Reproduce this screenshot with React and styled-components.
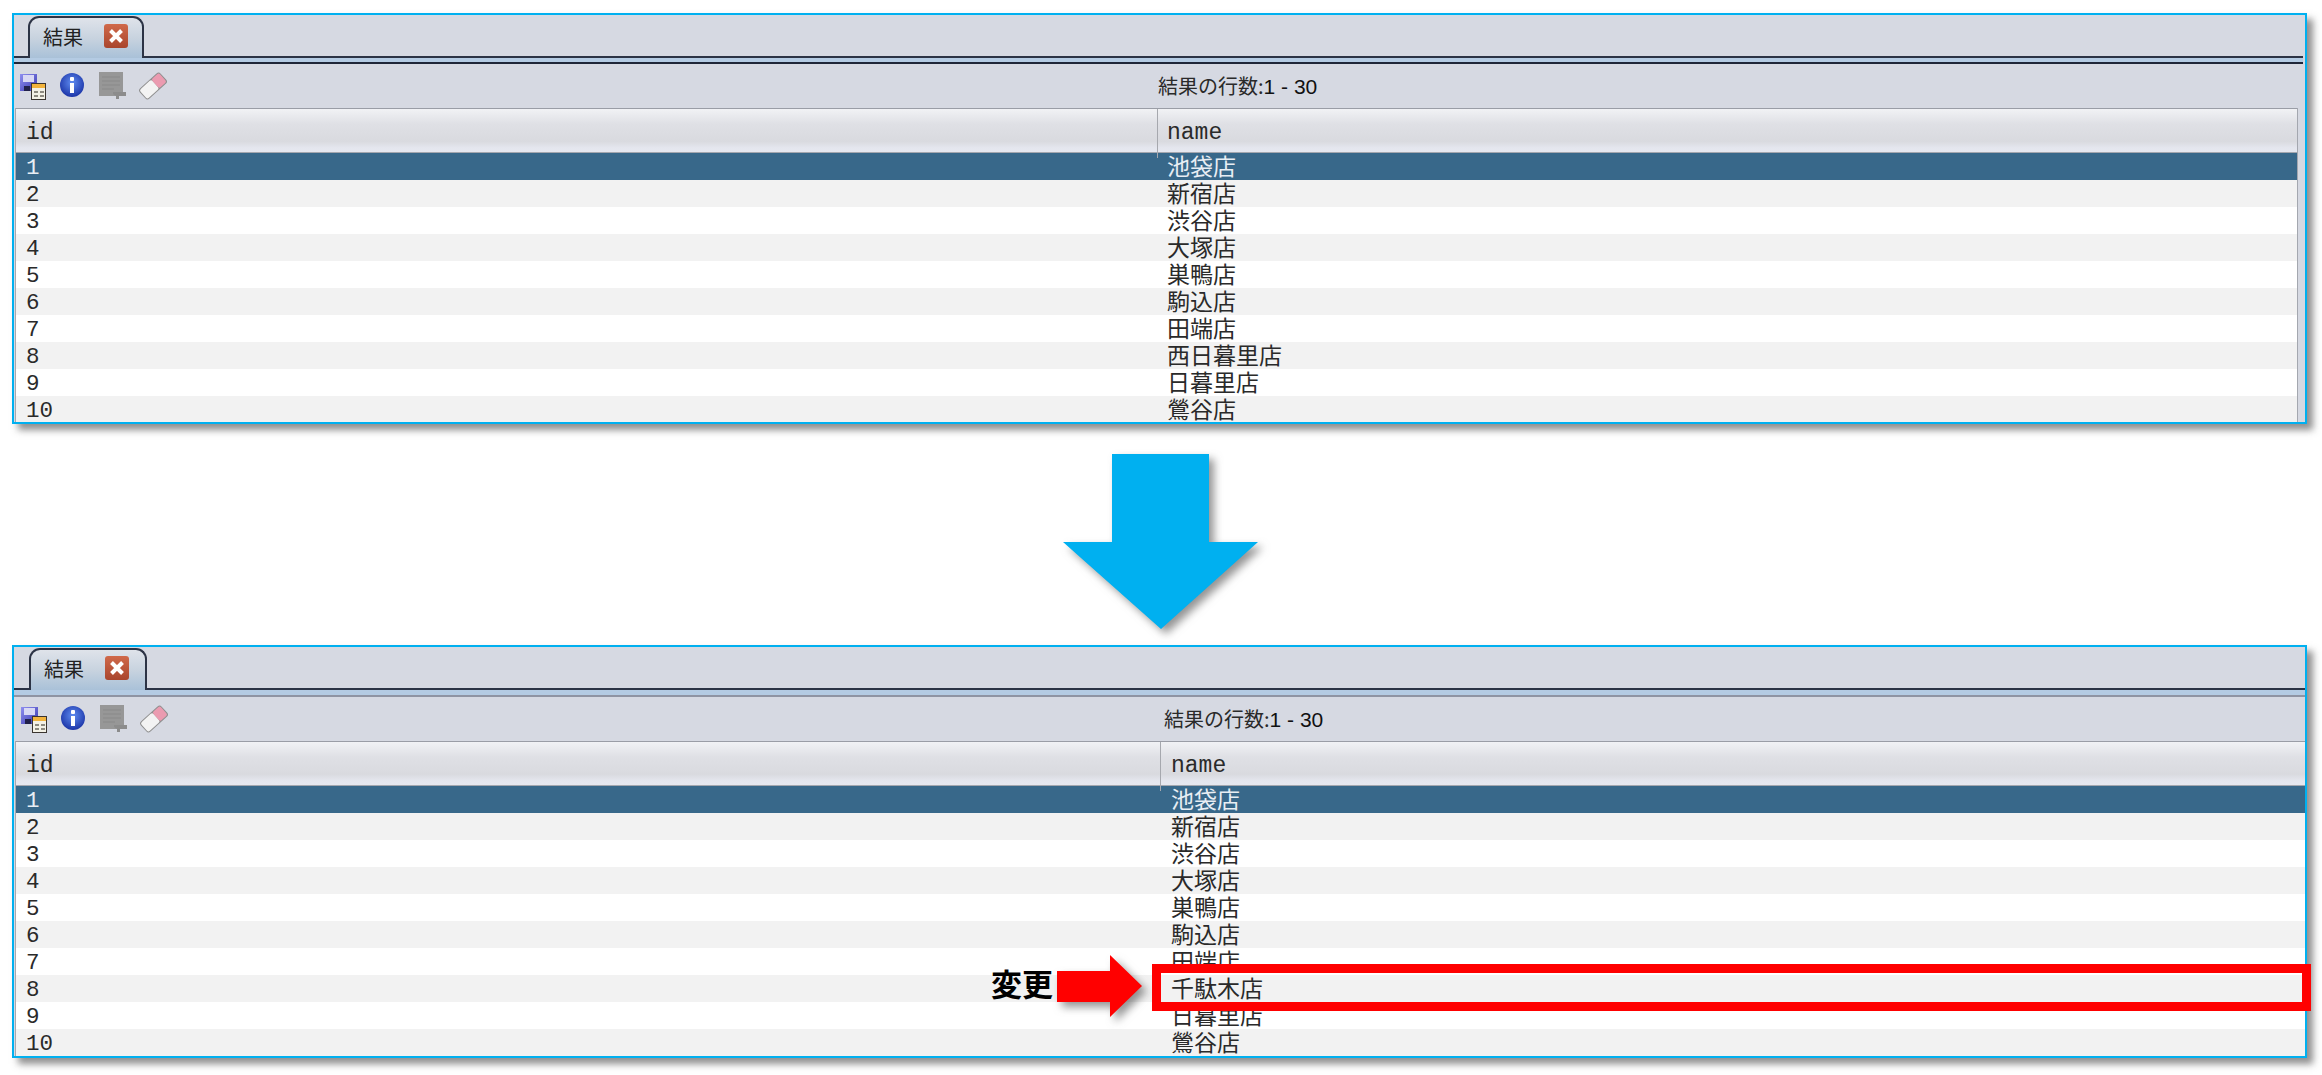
import React from "react";
import styled, { createGlobalStyle } from "styled-components";

const GlobalStyle = createGlobalStyle`
  html, body {
    margin: 0;
    padding: 0;
    background: #fff;
    overflow: hidden;
  }
`;

const CJK = `"Noto Sans CJK JP", "Liberation Sans", sans-serif`;
const MONO = `"Liberation Mono", "Noto Sans CJK JP", monospace`;

const Page = styled.div`
  position: relative;
  width: 2322px;
  height: 1075px;
  box-sizing: border-box;
  padding: 13px 15px 0 12px;
`;

const Panel = styled.section`
  box-sizing: border-box;
  height: ${(p) => (p.$lower ? "413px" : "411px")};
  border: 2px solid #00b0f0;
  background: #d6d9e2;
  box-shadow: 6px 6px 7px rgba(70, 70, 70, 0.6);
  overflow: hidden;
`;

const TabBar = styled.div`
  height: 43px;
  box-sizing: border-box;
  padding-left: ${(p) => (p.$lower ? "15px" : "14px")};
  border-bottom: 2px solid #2c3345;
  display: flex;
  align-items: flex-end;
  margin-right: ${(p) => (p.$lower ? "0" : "2px")};
`;

const Tab = styled.div`
  box-sizing: border-box;
  width: ${(p) => (p.$lower ? "118px" : "116px")};
  height: 42px;
  margin-bottom: -2px;
  padding: 0 0 4px 13px;
  display: flex;
  align-items: center;
  gap: 21px;
  border: 2px solid #2c3345;
  border-bottom: none;
  border-radius: 11px 11px 0 0;
  background: linear-gradient(#dfe3ea, #c8d3df 50%, #a9c1d8);
  font: 20px ${CJK};
  color: #222;
`;

const CloseBox = styled.span`
  width: 24px;
  height: 24px;
  flex: none;
  border-radius: 3px;
  background: linear-gradient(#d0694a, #a9452d);
  display: flex;
  align-items: center;
  justify-content: center;
`;

const TabStrip = styled.div`
  height: ${(p) => (p.$lower ? "5px" : "4px")};
  background: #b4cbe3;
  margin-right: ${(p) => (p.$lower ? "0" : "2px")};
  border-bottom: ${(p) => (p.$lower ? "2px solid #8f94a3" : "2px solid #1f2638")};
`;

const Toolbar = styled.div`
  height: 44px;
  display: grid;
  grid-template-columns: ${(p) => (p.$lower ? "1150px" : "1144px")} 1fr;
  align-items: center;
`;

const IconRow = styled.div`
  display: flex;
  gap: 12px;
  padding-left: ${(p) => (p.$lower ? "6px" : "5px")};
`;

const Count = styled.div`
  font: 20px ${CJK};
  color: #2a2a2a;
  line-height: 44px;

  b {
    font: 21px "Liberation Sans", sans-serif;
    color: #111;
  }
`;

const Table = styled.div`
  margin-left: 1px;
  margin-right: ${(p) => (p.$lower ? "0" : "7px")};
  border-left: 1px solid #a4a7af;
  border-right: ${(p) => (p.$lower ? "none" : "1px solid #a4a7af")};
`;

const HeaderRow = styled.div`
  display: grid;
  grid-template-columns: ${(p) => (p.$lower ? "1145px" : "1142px")} 1fr;
  box-sizing: border-box;
  height: 45px;
  border-top: 1px solid #9a9da6;
  border-bottom: 1px solid #a4a7af;
  background: linear-gradient(#f1f2f5, #dfe0e5 35%, #d9dadf 75%, #e4e6ee 90%, #e6e8f0);
`;

const HeaderCell = styled.div`
  font: 23px/49px ${MONO};
  color: #2a2a2a;
  padding-left: ${(p) => (p.$name ? (p.$lower ? "10px" : "9px") : "10px")};
  border-right: ${(p) => (p.$name ? "none" : "1px solid #a6a8ae")};
`;

const Row = styled.div`
  display: grid;
  grid-template-columns: ${(p) => (p.$lower ? "1145px" : "1142px")} 1fr;
  height: 27px;
  background: ${(p) =>
    p.$selected ? "#38688a" : p.$stripe ? "#f2f2f2" : "#fff"};
  color: ${(p) => (p.$selected ? "#e8eef4" : "#2a2a2a")};
`;

const IdCell = styled.div`
  font: 22.5px/31px ${MONO};
  padding-left: 10px;
`;

const NameCell = styled.div`
  font: 23px/25px ${CJK};
  padding-left: ${(p) => (p.$lower ? "10px" : "9px")};
  white-space: nowrap;
`;

const Divider = styled.div`
  height: 221px;
  display: flex;
  justify-content: center;
  padding-top: 30px;
  box-sizing: border-box;
  padding-left: 1px;
`;

const ChangeBox = styled.div`
  position: absolute;
  left: 1152px;
  top: 964px;
  width: 1159px;
  height: 47px;
  box-sizing: border-box;
  border: 9px solid #f00;
`;

const ChangeLabel = styled.div`
  position: absolute;
  left: 991px;
  top: 961px;
  font: 700 31px/44px ${CJK};
  color: #000;
`;

const ChangeArrow = styled.svg`
  position: absolute;
  left: 1057px;
  top: 955px;
  overflow: visible;
  filter: drop-shadow(5px 5px 4px rgba(60, 60, 60, 0.55));
`;

const DownArrow = styled.svg`
  overflow: visible;
  filter: drop-shadow(5px 5px 4px rgba(60, 60, 60, 0.55));
`;

function SaveIcon() {
  return (
    <svg width="28" height="28" viewBox="0 0 28 28">
      <defs>
        <linearGradient id="floppy" x1="0" y1="0" x2="1" y2="1">
          <stop offset="0" stopColor="#8f8ff0" />
          <stop offset="1" stopColor="#3a3ab0" />
        </linearGradient>
      </defs>
      <rect x="1" y="2" width="17" height="17" fill="url(#floppy)" />
      <rect x="4" y="3" width="11" height="7" fill="#d8d8f4" />
      <rect x="5" y="14" width="6" height="5" fill="#20204a" />
      <rect x="12" y="11" width="15" height="17" fill="#3b3530" />
      <rect x="13" y="12" width="13" height="15" fill="#f3f1e6" />
      <rect x="13" y="12" width="13" height="4" fill="#f2b33c" />
      <path d="M15 19h4v2h-4zM21 19h4v2h-4zM15 23h4v2h-4zM21 23h4v2h-4z" fill="#8d8a80" />
    </svg>
  );
}

function InfoIcon() {
  return (
    <svg width="28" height="28" viewBox="0 0 28 28">
      <defs>
        <radialGradient id="infoBall" cx="0.5" cy="0.4" r="0.6">
          <stop offset="0" stopColor="#5f8cf0" />
          <stop offset="1" stopColor="#1c35a8" />
        </radialGradient>
      </defs>
      <circle cx="13" cy="13" r="12" fill="url(#infoBall)" />
      <rect x="11" y="5" width="4" height="4" rx="1" fill="#fff" />
      <rect x="11" y="11" width="4" height="10" fill="#fff" />
    </svg>
  );
}

function ReloadIcon() {
  return (
    <svg width="28" height="28" viewBox="0 0 28 28">
      <rect x="0" y="0" width="24" height="24" fill="#979797" />
      <path d="M3 5h18M3 9h18M3 13h18M3 17h12" stroke="#8f8f8f" strokeWidth="1.5" />
      <path d="M14 20h13v4H20v3h-3v-3l-3-2z" fill="#8c8c8c" />
    </svg>
  );
}

function EraserIcon() {
  return (
    <svg width="28" height="28" viewBox="0 0 28 28">
      <g transform="rotate(-42 14 14)">
        <rect x="0" y="7" width="28" height="14" rx="3" fill="#8f8f8f" />
        <rect x="1" y="8" width="16" height="12" rx="2" fill="#f3f3f3" />
        <rect x="17" y="8" width="10" height="12" rx="2" fill="#eb9bb0" />
      </g>
    </svg>
  );
}

function ResultPanel({ lower, rows }) {
  return (
    <Panel $lower={lower}>
      <TabBar $lower={lower}>
        <Tab $lower={lower}>
          結果
          <CloseBox>
            <svg width="16" height="16" viewBox="0 0 16 16">
              <path d="M2.5 2.5l11 11M13.5 2.5l-11 11" stroke="#fff" strokeWidth="4" />
            </svg>
          </CloseBox>
        </Tab>
      </TabBar>
      <TabStrip $lower={lower} />
      <Toolbar $lower={lower}>
        <IconRow $lower={lower}>
          <SaveIcon />
          <InfoIcon />
          <ReloadIcon />
          <EraserIcon />
        </IconRow>
        <Count>
          結果の行数:<b>1 - 30</b>
        </Count>
      </Toolbar>
      <Table $lower={lower}>
        <HeaderRow $lower={lower}>
          <HeaderCell>id</HeaderCell>
          <HeaderCell $name $lower={lower}>name</HeaderCell>
        </HeaderRow>
        {rows.map((name, i) => (
          <Row key={i} $lower={lower} $selected={i === 0} $stripe={i % 2 === 1}>
            <IdCell>{i + 1}</IdCell>
            <NameCell $lower={lower}>{name}</NameCell>
          </Row>
        ))}
      </Table>
    </Panel>
  );
}

const before = ["池袋店", "新宿店", "渋谷店", "大塚店", "巣鴨店", "駒込店", "田端店", "西日暮里店", "日暮里店", "鶯谷店"];
const after = ["池袋店", "新宿店", "渋谷店", "大塚店", "巣鴨店", "駒込店", "田端店", "千駄木店", "日暮里店", "鶯谷店"];

export default function App() {
  return (
    <Page>
      <GlobalStyle />
      <ResultPanel rows={before} />
      <Divider>
        <DownArrow width="195" height="175" viewBox="0 0 195 175">
          <path d="M49 0h97v88h49L98 175 0 88h49z" fill="#00b0f0" />
        </DownArrow>
      </Divider>
      <ResultPanel lower rows={after} />
      <ChangeBox />
      <ChangeLabel>変更</ChangeLabel>
      <ChangeArrow width="85" height="62" viewBox="0 0 85 62">
        <path d="M0 16h53V0l32 31-32 31V47H0z" fill="#f00" />
      </ChangeArrow>
    </Page>
  );
}
